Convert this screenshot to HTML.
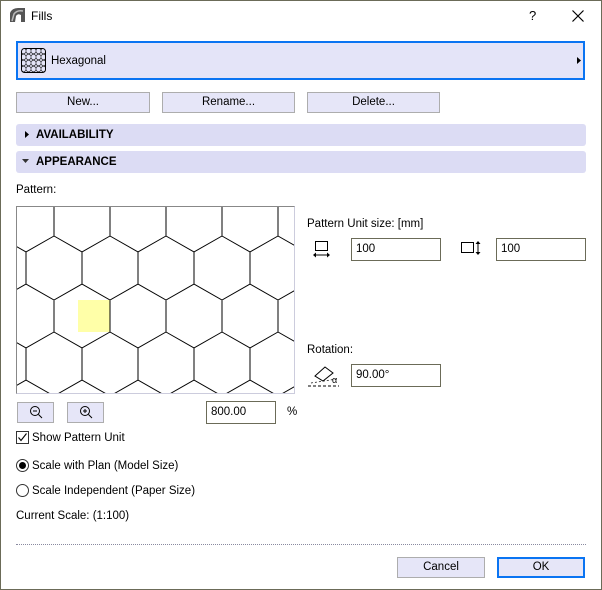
<!DOCTYPE html>
<html><head><style>
*{margin:0;padding:0;box-sizing:border-box}
body{width:602px;height:590px;background:#fff;font-family:"Liberation Sans",sans-serif;font-size:11.5px;color:#000;position:relative;overflow:hidden}
.win{position:absolute;left:0;top:0;width:602px;height:590px;border:1px solid #6b6b58}
.a{position:absolute}
.btn{position:absolute;background:#e6e6f8;border:1px solid #adadad;text-align:center;line-height:19px}
.bar{position:absolute;left:16px;width:570px;height:22px;background:#dcdcf4;border-radius:3px;font-weight:bold;line-height:22px;padding-left:20px}
.inp{position:absolute;border:1px solid #6b6b58;background:#fff;height:23px;line-height:21px;padding-left:4px}
</style></head><body>
<div class="win"></div>
<svg class="a" style="left:9px;top:7px" width="18" height="16"><path d="M1 15 L1 6 Q3 1 9 1 L16 1 L16 15 L12 15 L12 8 Q9 6 7 9 L6 15Z" fill="#555"/><path d="M3 14 L5 7 Q8 3 14 4" stroke="#bbb" stroke-width="1.5" fill="none"/></svg>
<div class="a" style="left:31px;top:9px;font-size:12px">Fills</div>
<div class="a" style="left:529px;top:8px;font-size:13px">?</div>
<svg class="a" style="left:572px;top:10px" width="12" height="12"><path d="M0.5 0.5L11.5 11.5M11.5 0.5L0.5 11.5" stroke="#000" stroke-width="1.2"/></svg>

<div class="a" style="left:16px;top:41px;width:569px;height:39px;border:2px solid #0a74f2;background:#e4e4f8"></div>
<svg class="a" style="left:21px;top:48px" width="25" height="25"><defs><pattern id="sh" width="5" height="6" patternUnits="userSpaceOnUse"><path d="M0 1.5L2.5 0L5 1.5M2.5 0V-1M0 1.5V4.5L2.5 6L5 4.5V1.5" stroke="#000" stroke-width=".6" fill="none"/></pattern></defs><rect x=".5" y=".5" width="24" height="24" rx="3" fill="url(#sh)" stroke="#000"/></svg>
<div class="a" style="left:51px;top:55px">Hexagonal</div>
<svg class="a" style="left:577px;top:57px" width="4" height="7"><path d="M0 0L4 3.5L0 7Z"/></svg>

<div class="btn" style="left:16px;top:92px;width:134px;height:21px">New...</div>
<div class="btn" style="left:162px;top:92px;width:133px;height:21px">Rename...</div>
<div class="btn" style="left:307px;top:92px;width:133px;height:21px">Delete...</div>

<div class="bar" style="top:124px">AVAILABILITY</div>
<svg class="a" style="left:25px;top:131px" width="4" height="7"><path d="M0 0L4 3.5L0 7Z"/></svg>
<div class="bar" style="top:151px">APPEARANCE</div>
<svg class="a" style="left:22px;top:159px" width="7" height="4"><path d="M0 0L7 0L3.5 4Z" fill="#333"/></svg>

<div class="a" style="left:16px;top:184px">Pattern:</div>
<div class="a" style="left:16px;top:206px;width:279px;height:188px;border-top:1px solid #888;border-left:1px solid #888;border-right:1px solid #ccd;border-bottom:1px solid #ccd;overflow:hidden;background:#fff">
<svg width="279" height="188" style="display:block">
<defs><pattern id="hx" x="9" y="-3" width="56" height="96" patternUnits="userSpaceOnUse">
<path d="M28 0V32M28 32L56 48M28 32L0 48M0 48V80M56 48V80M0 80L28 96M56 80L28 96" stroke="#000" stroke-width="1" fill="none"/></pattern></defs>
<rect x="61" y="93" width="32" height="32" fill="#ffffa8"/>
<rect width="279" height="188" fill="url(#hx)"/>
</svg></div>

<div class="a" style="left:307px;top:218px">Pattern Unit size: [mm]</div>
<svg class="a" style="left:313px;top:241px" width="18" height="18"><rect x="2.5" y="0.5" width="12" height="9" fill="none" stroke="#000"/><path d="M1 14H16" stroke="#000"/><path d="M0 14L3 11.5V16.5ZM17 14L14 11.5V16.5Z" fill="#000"/></svg>
<div class="inp" style="left:351px;top:238px;width:90px">100</div>
<svg class="a" style="left:461px;top:241px" width="20" height="16"><rect x="0.5" y="1.5" width="12" height="10" fill="none" stroke="#000"/><path d="M17 1V13" stroke="#000"/><path d="M17 0L14.5 3H19.5ZM17 14L14.5 11H19.5Z" fill="#000"/></svg>
<div class="inp" style="left:496px;top:238px;width:90px">100</div>

<div class="a" style="left:307px;top:344px">Rotation:</div>
<svg class="a" style="left:307px;top:363px" width="36" height="25"><path d="M8 13L18 4L26 10L16 18Z" fill="none" stroke="#000"/><path d="M1 23H32" stroke="#000" stroke-dasharray="3,2"/><path d="M4 20L30 16" stroke="#000" stroke-dasharray="2,2" stroke-width=".7"/><text x="25" y="20" font-size="9" font-family="Liberation Sans">α</text></svg>
<div class="inp" style="left:351px;top:364px;width:90px">90.00°</div>

<div class="btn" style="left:17px;top:402px;width:37px;height:21px"></div>
<svg class="a" style="left:29px;top:405px" width="14" height="14"><circle cx="6" cy="6" r="4.5" fill="none" stroke="#000"/><path d="M4 6H8M9.5 9.5L13 13" stroke="#000"/></svg>
<div class="btn" style="left:67px;top:402px;width:37px;height:21px"></div>
<svg class="a" style="left:79px;top:405px" width="14" height="14"><circle cx="6" cy="6" r="4.5" fill="none" stroke="#000"/><path d="M4 6H8M6 4V8M9.5 9.5L13 13" stroke="#000"/></svg>
<div class="inp" style="left:206px;top:401px;width:70px">800.00</div>
<div class="a" style="left:287px;top:406px">%</div>

<svg class="a" style="left:16px;top:431px" width="14" height="14"><rect x="0.5" y="0.5" width="12" height="12" fill="#fff" stroke="#333"/><path d="M2.5 6.5L5 9.5L10.5 2.5" stroke="#000" fill="none" stroke-width="1.1"/></svg>
<div class="a" style="left:32px;top:432px">Show Pattern Unit</div>
<svg class="a" style="left:16px;top:459px" width="14" height="14"><circle cx="6.5" cy="6.5" r="6" fill="#fff" stroke="#333"/><circle cx="6.5" cy="6.5" r="3.5"/></svg>
<div class="a" style="left:32px;top:460px">Scale with Plan (Model Size)</div>
<svg class="a" style="left:16px;top:484px" width="14" height="14"><circle cx="6.5" cy="6.5" r="6" fill="#fff" stroke="#333"/></svg>
<div class="a" style="left:32px;top:485px">Scale Independent (Paper Size)</div>
<div class="a" style="left:16px;top:510px">Current Scale: (1:100)</div>

<div class="a" style="left:16px;top:544px;width:570px;border-top:1px dotted #8a8aa0"></div>
<div class="btn" style="left:397px;top:557px;width:88px;height:21px">Cancel</div>
<div class="btn" style="left:497px;top:557px;width:88px;height:21px;border:2px solid #0a74f2;line-height:17px">OK</div>
</body></html>
